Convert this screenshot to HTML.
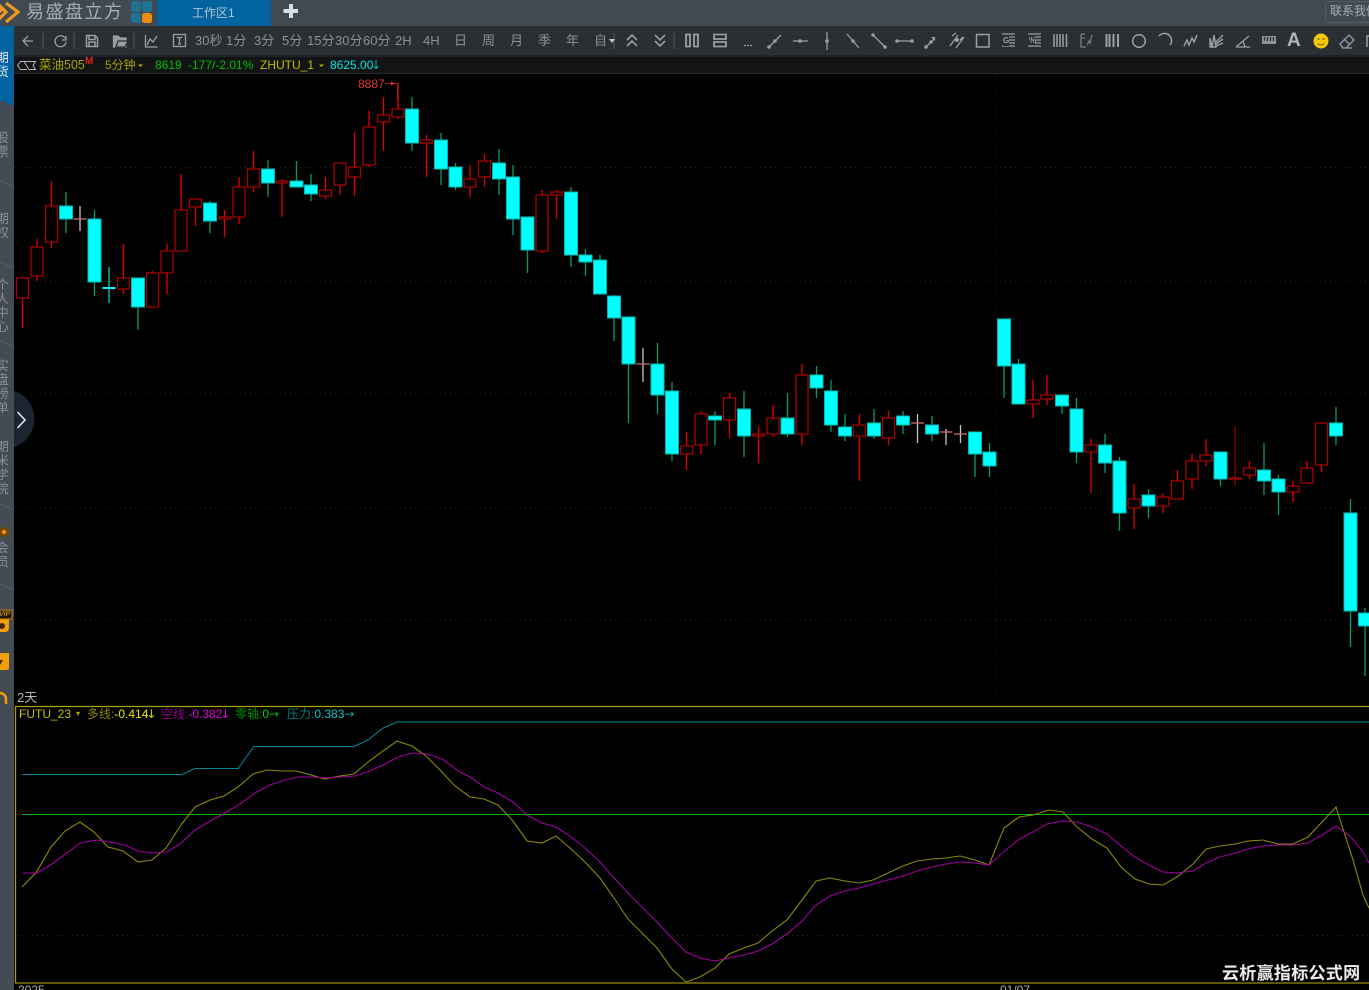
<!DOCTYPE html>
<html lang="zh"><head><meta charset="utf-8"><title>易盛盘立方</title>
<style>
html,body{margin:0;padding:0;background:#000}
#p{position:relative;width:1369px;height:990px;overflow:hidden;background:#000;font-family:"Liberation Sans","Noto Sans CJK SC",sans-serif;font-size:12px;line-height:16px}
#p svg{position:absolute;left:0;top:0}
.t{position:absolute;white-space:nowrap}
.b{color:#8c9196;font-size:13px}
.s{position:absolute;left:-4px;width:13px;font-size:12.5px;line-height:14px;color:#8a9096;text-align:center}
.a{font-family:"DejaVu Sans",sans-serif}
</style></head><body><div id="p">
<svg width="1369" height="990" viewBox="0 0 1369 990" fill="none">
<!-- chrome -->
<rect width="1369" height="26" fill="#414952"/>
<rect y="26" width="1369" height="29" fill="#2a2f34"/>
<rect y="55" width="1369" height="2" fill="#1f2327"/>
<rect y="57" width="1369" height="16" fill="#131415"/>
<rect y="73" width="1369" height="1" fill="#2c2c2c"/>
<rect x="157" width="114" height="26" fill="#01639f"/>
<rect x="0" y="26" width="14" height="964" fill="#434b54"/>
<path d="M0 26H14V106L0 100Z" fill="#01639f"/>
<g stroke="#555d66"><path d="M0 181L14 187M0 262L14 268M0 341L14 347M0 422L14 428M0 504L14 510M0 584L14 590"/></g>
<!-- logo -->
<g stroke="#f0981e" stroke-width="3.200"><path d="M-3 3L6 12-3 21M6 3L18 12 6 22M-2 13L3 8"/></g>
<rect x="131" y="1" width="10" height="11" rx="2.500" fill="#1f7390"/><rect x="142" y="1" width="10" height="11" rx="2.500" fill="#1f7390"/><rect x="131" y="13" width="10" height="10" rx="2.500" fill="#1f7390"/><rect x="142" y="13" width="10" height="10" rx="2.500" fill="#ec8c0c"/>
<path d="M291 4V18M283.500 11H298" stroke="#d8dee2" stroke-width="4"/>
<rect x="1325.500" y="1.500" width="60" height="21" rx="4" stroke="#555d66"/>
<!-- toolbar icons -->
<g stroke="#9a9fa3" stroke-width="1.300">
<path d="M33 41H23M28 36L23 41 28 46"/>
<path d="M43 33V49M74 33V49M134 33V49M614 33V49M674 33V49" stroke="#4b5157"/>
<path d="M65 38A5.500 5.500 0 1 0 66 42M66 36V40H62"/>
<path d="M86.500 35.500H95L97.500 38V46.500H86.500ZM89 36V39.500H95V36M89 46V42H95V46" stroke-width="1.500"/>
<path d="M113.500 47V36H118L120 38H126V47Z" fill="#9a9fa3"/><path d="M116 47L118 41H128L125 47Z" fill="#9a9fa3" stroke="#2a2f34"/>
<path d="M145.500 35V47H157.500M147 45L150 39 153 42 157 36"/>
<rect x="173.500" y="34.500" width="12" height="12"/><path d="M176.500 37.500H182.500M179.500 37.500V44M178 44H181"/>
<path d="M627 40L632 35 637 40M627 46L632 41 637 46M655 35L660 40 665 35M655 41L660 46 665 41" stroke-width="1.600"/>
<path d="M686 34.500H690V46.500H686ZM694 34.500H698V46.500H694Z" stroke-width="1.800"/>
<path d="M714 34.500H726V39H714ZM714 42H726V46.500H714Z" stroke-width="1.800"/>
<path d="M744 45.500H752" stroke-dasharray="2 1" />
<path d="M769 47L781 35M793 41H808M827 32V50M847 34L859 48M873 35L885 47M897 41H913M927 46L935 38"/>
<path d="M950 46L958 35M956 48L964 37M952 36L956 33M960 40L963 37"/>
<rect x="976.500" y="34.500" width="12.500" height="12.500" stroke-width="1.500"/>
<path d="M1002 34H1015M1008 37H1015M1008 40H1015M1008 43H1015M1002 46H1015M1028 34H1041M1035 37H1041M1035 40H1041M1035 43H1041M1028 46H1041"/>
<path d="M1054 34V47M1057 34V47M1060 34V47M1063 34V47M1066.500 34V47" stroke-width="1.500"/>
<path d="M1081 34V47H1086M1081 34H1085M1081 38H1085M1087 45L1089 41 1090 43 1092 35" stroke="#787d81"/>
<path d="M1106.500 34V47M1109.500 34V47M1113.500 34V47M1118 34V47" stroke-width="2"/>
<circle cx="1139" cy="41" r="6.300" stroke-width="1.500"/>
<path d="M1159 36A6.500 6.500 0 0 1 1170 45" stroke-width="1.500"/>
<path d="M1184 46L1187 40 1189 45 1192 38 1194 42 1197 35" stroke-width="1.500"/>
<path d="M1210 47V38L1212 47 1214 35 1216 47H1210ZM1216 42L1223 35M1216 44L1223 39M1216 46L1223 43" stroke-width="1.400"/>
<path d="M1236 47H1250M1236 47L1249 36M1243 41L1245 47" stroke-width="1.300"/>
<rect x="1262" y="36" width="14" height="8" fill="#8e9397" stroke="none"/>
<path d="M1264.500 37V41M1267.500 37V41M1270.500 37V41M1273.500 37V41" stroke="#2a2f34"/>
<path d="M1343 48L1340 44 1349 35 1354 40 1346 48ZM1344 39L1350 45M1342 48H1352" stroke-width="1.300"/>
<path d="M1367 47V36H1369" stroke-width="1.500"/>
</g>
<g fill="#9a9fa3"><circle cx="769" cy="47" r="1.800"/><circle cx="775" cy="41" r="1.800"/><circle cx="800" cy="41" r="1.800"/><circle cx="827" cy="41" r="1.800"/><circle cx="853" cy="41" r="1.800"/><circle cx="873" cy="35" r="1.800"/><circle cx="885" cy="47" r="1.800"/><circle cx="897" cy="41" r="1.800"/><circle cx="912" cy="41" r="1.800"/><circle cx="926" cy="47" r="1.800"/><circle cx="931" cy="42" r="1.800"/><circle cx="957" cy="40" r="2"/></g>
<path d="M935 37V41L931 37Z" fill="#9a9fa3"/>
<path d="M609 39H615L612 43Z" fill="#c8c8c8"/>
<circle cx="1321" cy="41" r="7.500" fill="#f5c800"/><circle cx="1318.500" cy="39" r="1" fill="#7a6200"/><circle cx="1323.500" cy="39" r="1" fill="#7a6200"/><path d="M1317.500 43.500Q1321 46.500 1324.500 43.500" stroke="#7a6200"/>
<!-- info bar icon -->
<g stroke="#b4b8bc"><path d="M24 61.500H20.500L17.500 65.500 20.500 69.500H27M24 61.500L29 69.500M24 61.500H35.500L33 65.500 35.500 69.500H29"/></g>
<path d="M138 64.500H143L140.500 67ZM319 64.500H324L321.500 67Z" fill="#b4b400"/>
<!-- sidebar widgets -->
<circle cx="4" cy="532" r="5" fill="#7a4a05"/><circle cx="4" cy="532" r="2" fill="#e89a20"/>
<path d="M0 615H9V628Q9 632 5 632H0Z" fill="#f29f05"/>
<circle cx="2" cy="626" r="3" fill="#3a2a05"/>
<path d="M0 653H9V668Q9 670 7 670H0Z" fill="#f29f05"/><path d="M0 660H3L0 665Z" fill="#3a2a05"/>
<path d="M0 693A6 6 0 0 1 6 699V704" stroke="#f29f05" stroke-width="2.500"/>
<rect x="-2" y="610" width="14" height="9" fill="#201a05" stroke="#c88a10" stroke-width="1"/>
<circle cx="5" cy="419" r="29.500" fill="#1b2430"/>
<rect x="0" y="390" width="14" height="58" fill="#434b54"/>
<path d="M17.500 412L25 420 17.500 428" stroke="#e0e6ea" stroke-width="1.600"/>
<!-- grid -->
<g stroke="#242424" stroke-dasharray="1 4"><path d="M15 167.500H1369M15 281.500H1369M15 393.500H1369M15 507.500H1369M15 619.500H1369M17 935.500H1369"/></g>
<path d="M996.500 74V705" stroke="#181818" stroke-dasharray="1 4"/>
<!-- wicks -->
<g stroke-width="1.300">
<path stroke="#e40000" d="M22.500 276V328M37 239V281M51.500 181V248M123.500 244V294M152.500 271V307M167 244V294M181 174V251M195.500 199V226M224.500 210V237M239 177V224M253.500 151V192M282 179V217M325.500 177V199M340 163V195M354.500 132V196M369 111V167M383.500 97V151M398 83V119M426.500 135V177M470 165V197M484.500 154V187M542 190V253M556.500 190V219M686.500 432V470M701 411V454M729.500 393V438M758.500 427V463M773 405V437M802 364V445M859.500 414V481M888.500 411V445M1033 380V418M1047 375V405M1091 439V493M1134 484V529M1163 493V513M1177.500 470V499M1192 454V489M1206 439V466M1249.500 461V479M1293 481V502M1307 461V483M1321.500 423V472"/>
<path stroke="#8a0000" d="M1235 426V486"/>
<path stroke="#009c70" d="M66 192V233M94.500 210V296M138 278V330M210 201V233M268 160V197M296.500 161V187M311 174V201M412 97V151M441 133V185M455.500 163V190M499 149V195M513 165V235M527.500 217V273M571 187V267M585.500 249V276M600 255V295M614 295V341M628.500 317V423M657.500 343V414M672 382V461M715 411V445M744 391V457M787.500 393V437M816.500 366V398M831 380V432M845 414V441M874 409V439M903 411V434M932 416V441M975 432V477M989.500 443V477M1004 319V398M1018.500 359V404M1062 395V414M1076.500 398V463M1105 434V473M1119.500 457V531M1148.500 489V518M1220.500 452V486M1264 443V495M1278.500 475V515M1336 407V445M1350.500 499V647M1365 608V676"/>
<path stroke="#00d0c0" d="M109 267V303"/>
<path stroke="#c4c4c4" d="M80 206V231M643 348V382M917.500 414V443M946 429V445M960.500 425V443"/>
<path stroke="#d87070" d="M73.500 219H86.500M636.500 364H649.500M911 423H924M939.500 432H952.500M954 434H967"/>
<path stroke="#00ffff" stroke-width="2" d="M102.500 288H115.500"/>
</g>
<!-- up bodies -->
<g fill="#000" stroke="#a80000" stroke-width="1.300">
<path d="M16.500 278h12V298h-12zM31 247h12V276h-12zM45.500 206h12V242h-12zM117.500 278h12V289h-12zM146.500 273h12V307h-12zM161 251h12V273h-12zM175 210h12V251h-12zM189.500 199h12V207h-12zM218.500 217h12V219h-12zM233 187h12V217h-12zM247.500 169h12V187h-12zM276 181h12V183h-12zM319.500 190h12V196h-12zM334 163h12V185h-12zM348.500 167h12V177h-12zM363 127h12V165h-12zM377.500 115h12V122h-12zM392 109h12V117h-12zM420.500 140h12V143h-12zM464 179h12V187h-12zM478.500 161h12V177h-12zM536 195h12V251h-12zM550.500 192h12V195h-12zM680.500 446h12V454h-12zM695 414h12V445h-12zM723.500 398h12V420h-12zM752.500 434h12V436h-12zM767 418h12V434h-12zM796 375h12V434h-12zM853.500 425h12V436h-12zM882.500 418h12V438h-12zM1027 400h12V404h-12zM1041 395h12V399h-12zM1085 445h12V452h-12zM1128 499h12V508h-12zM1157 497h12V506h-12zM1171.500 481h12V499h-12zM1186 461h12V479h-12zM1200 455h12V461h-12zM1229 478h12V479h-12zM1243.500 468h12V475h-12zM1287 486h12V492h-12zM1301 468h12V483h-12zM1315.500 423h12V465h-12z"/>
</g>
<!-- down bodies -->
<g fill="#0ff" stroke="#00b8b0">
<path d="M59.500 206h13V219h-13zM88 219h13V282h-13zM131.500 278h13V307h-13zM203.500 203h13V221h-13zM261.500 169h13V183h-13zM290 181h13V187h-13zM304.500 185h13V194h-13zM405.500 109h13V143h-13zM434.500 140h13V169h-13zM449 167h13V187h-13zM492.500 163h13V179h-13zM506.500 177h13V219h-13zM521 217h13V250h-13zM564.500 192h13V255h-13zM579 255h13V262h-13zM593.500 260h13V294h-13zM607.500 296h13V318h-13zM622 317h13V364h-13zM651 364h13V395h-13zM665.500 391h13V454h-13zM708.500 416h13V420h-13zM737.500 409h13V436h-13zM781 418h13V434h-13zM810 375h13V388h-13zM824.500 391h13V425h-13zM838.500 427h13V436h-13zM867.500 423h13V436h-13zM896.500 416h13V425h-13zM925.500 425h13V434h-13zM968.500 432h13V454h-13zM983 452h13V466h-13zM997.500 319h13V366h-13zM1012 364h13V404h-13zM1055.500 395h13V406h-13zM1070 409h13V452h-13zM1098.500 445h13V463h-13zM1113 461h13V513h-13zM1142 495h13V506h-13zM1214 452h13V479h-13zM1257.500 470h13V481h-13zM1272 479h13V492h-13zM1329.500 423h13V436h-13zM1344 513h13V611h-13zM1358.500 613h13V626h-13z"/>
</g>
<!-- high marker -->
<path d="M385 83.500H397.500V100" stroke="#a02020"/><path d="M391 81.500L395 83.500 391 85.500Z" fill="#e03030"/>
<!-- indicator panel -->
<path d="M15.500 983V706.500H1369" stroke="#a8a200" stroke-width="1.300"/>
<path d="M15 983H1369" stroke="#7a7400" stroke-width="1.500"/>
<path d="M22 814.500H1369" stroke="#00bb00" stroke-width="1"/>
<path d="M22 774.500H182L195 768.500H238L254 746.500H354L368 740 383 728 397 722H1369" stroke="#008c94" stroke-width="1"/>
<path stroke="#8c8a00" stroke-width="1.100" d="M22 887L36.500 872 51 847 65 831 80 822 94 832 108 847 123 851 138 862 152 860 166 848 181 825 195 807 210 800 224 796 238 787 253 774 267 770 282 771 296 771 311 775 325 779 340 776 354 774 368 762 383 751 397 741 412 746 426 756 441 771 455 786 470 797 484 799 498 805 513 821 527 841 542 843 556 836 570 848 585 862 600 878 614 898 628 919 643 934 657 948 672 969 686 982 700 977 715 968 729 954 744 948 758 943 772 931 787 920 802 900 816 881 830 878 845 881 859 883 873 880 888 873 903 866 917 861 932 859 946 858 960 856 975 860 989 865 1004 828 1019 817 1033 815 1049 810 1063 812 1077 827 1092 839 1107 848 1121 867 1135 879 1149 884 1163 885 1177 877 1193 864 1206 849 1220 846 1235 844 1248 841 1263 840 1278 844 1293 844 1308 837 1322 822 1336 807 1353 860 1363 895 1369 908"/>
<path stroke="#a000a0" stroke-width="1.100" d="M23 873L37 873 52 864 67 853 80 843 97 840 110 842 125 845 138 851 153 853 167 852 180 844 195 830 212 820 225 813 240 804 255 793 270 785 285 780 298 777 313 777 327 778 340 777 355 776 370 771 385 764 398 757 413 753 427 754 442 759 460 772 470 777 484 787 498 793 513 802 527 815 542 823 556 827 570 836 585 848 600 862 614 878 628 893 643 908 657 922 672 938 686 952 700 958 715 961 729 958 744 955 758 951 772 944 787 934 802 921 816 905 830 896 845 891 859 888 873 884 888 880 903 876 917 871 932 867 946 864 960 862 975 863 989 865 1000 855 1018 840 1033 832 1047 824 1063 821 1077 822 1092 827 1107 834 1121 846 1135 857 1149 865 1163 872 1177 873 1193 871 1206 863 1220 857 1235 853 1248 849 1263 846 1278 845 1293 845 1308 843 1322 835 1336 826 1350 836 1363 852 1369 863"/>
</svg>

<!-- top -->
<span class="t" style="left:26px;top:1px;font-size:18px;line-height:22px;letter-spacing:1.500px;color:#a9aeb3">易盛盘立方</span>
<span class="t" style="left:192px;top:5px;color:#b2c8d6">工作区1</span>
<span class="t" style="left:1330px;top:3px;color:#a6adb3">联系我们</span>
<!-- toolbar text -->
<span class="t b" style="left:195px;top:33px">30秒</span>
<span class="t b" style="left:226px;top:33px">1分</span>
<span class="t b" style="left:254px;top:33px">3分</span>
<span class="t b" style="left:282px;top:33px">5分</span>
<span class="t b" style="left:307px;top:33px">15分</span>
<span class="t b" style="left:335px;top:33px">30分</span>
<span class="t b" style="left:363px;top:33px">60分</span>
<span class="t b" style="left:395px;top:33px">2H</span>
<span class="t b" style="left:423px;top:33px">4H</span>
<span class="t b" style="left:454px;top:33px">日</span>
<span class="t b" style="left:482px;top:33px">周</span>
<span class="t b" style="left:510px;top:33px">月</span>
<span class="t b" style="left:538px;top:33px">季</span>
<span class="t b" style="left:566px;top:33px">年</span>
<span class="t b" style="left:594px;top:33px">自</span>
<span class="t" style="left:1287px;top:31px;font-size:19px;line-height:20px;font-weight:bold;color:#aeb6bc">A</span>
<span class="t" style="left:1008px;top:36px;font-size:8px;line-height:10px;color:#9a9fa3;background:#2a2f34;margin-left:-5px;font-weight:bold">G</span>
<span class="t" style="left:1034px;top:36px;font-size:8px;line-height:10px;color:#9a9fa3;margin-left:-5px;font-weight:bold">%</span>
<!-- info bar -->
<span class="t" style="left:39px;top:57px;font-size:12.500px;color:#a8a200">菜油505</span>
<span class="t" style="left:85px;top:54px;font-size:10px;color:#e02020;font-weight:bold">M</span>
<span class="t" style="left:105px;top:57px;font-size:12px;color:#a8a200">5分钟</span>
<span class="t" style="left:155px;top:57px;color:#00c000">8619</span>
<span class="t" style="left:188px;top:57px;color:#00c000">-177/-2.01%</span>
<span class="t" style="left:260px;top:57px;color:#c0c000">ZHUTU_1</span>
<span class="t" style="left:330px;top:57px;color:#00e8e8">8625.00</span>
<span class="t a" style="left:371px;top:57px;color:#00c0c0">↓</span>
<span class="t" style="left:358px;top:76px;color:#e03434">8887</span>
<span class="t" style="left:17px;top:690px;font-size:13px;color:#b4b4b4">2天</span>
<!-- indicator legend -->
<span class="t" style="left:19px;top:706px;color:#c4c000">FUTU_23</span>
<span class="t" style="left:76px;top:706px;color:#b0aa00;font-size:8px">▾</span>
<span class="t" style="left:87px;top:706px;color:#8c8a00">多线:<span style="color:#e8e800">-0.414</span><span class="a" style="color:#d8d800;margin-left:-2px">↓</span></span>
<span class="t" style="left:161px;top:706px;color:#8c008c">空线:<span style="color:#e000e0">-0.382</span><span class="a" style="color:#e000e0;margin-left:-2px">↓</span></span>
<span class="t" style="left:235px;top:706px;color:#008a00">零轴:<span style="color:#00d000">0</span><span class="a" style="color:#00b000">→</span></span>
<span class="t" style="left:287px;top:706px;color:#007c80">压力:<span style="color:#00c8c8">0.383</span><span class="a" style="color:#00a8a8">→</span></span>
<span class="t" style="left:18px;top:982px;color:#a8a8a8">2025</span>
<span class="t" style="left:1000px;top:982px;color:#a8a8a8">01/07</span>
<span class="t" style="left:1222px;top:965px;font-size:17px;line-height:18px;font-weight:bold;color:#ededed;letter-spacing:.3px">云析赢指标公式网</span>
<!-- sidebar text -->
<div class="s" style="top:51px;color:#e4edf3">期<br>货</div>
<div class="s" style="top:131px">股<br>票</div>
<div class="s" style="top:212px">期<br>权</div>
<div class="s" style="top:278px">个<br>人<br>中<br>心</div>
<div class="s" style="top:359px">实<br>盘<br>榜<br>单</div>
<div class="s" style="top:440px">期<br>米<br>学<br>院</div>
<div class="s" style="top:541px">会<br>员</div>
<span class="t" style="left:-1px;top:610px;font-size:7px;line-height:9px;font-style:italic;color:#e8a018;width:14px;overflow:hidden">VIP</span>
</div></body></html>
